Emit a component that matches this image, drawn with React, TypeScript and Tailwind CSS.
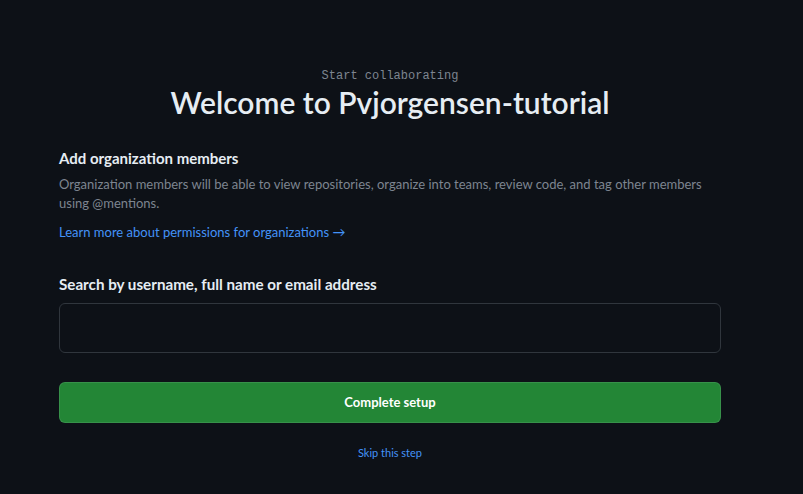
import React, { useState } from "react";

const App: React.FC = () => {
  const [query, setQuery] = useState("");

  return (
    <div className="min-h-[494px] w-full bg-[#0d1117] text-[#e6edf3] font-['Lato',sans-serif]">
      <div className="ml-[59px] w-[662px] pt-[68px]">
        <div className="text-center">
          <p className="font-['Liberation_Mono',monospace] text-[12px] leading-[16px] text-[#7d8590]">Start collaborating</p>
          <h1 className="text-[30px] leading-[36px] font-semibold text-[#e6edf3]">Welcome to Pvjorgensen-tutorial</h1>
        </div>

        <div className="mt-[27px]">
          <h2 className="text-[15px] leading-[22px] font-bold">Add organization members</h2>
          <p className="mt-[6px] text-[13px] leading-[19px] text-[#7d8590]">
            Organization members will be able to view repositories, organize into teams, review code, and tag other members using @mentions.
          </p>
          <a href="#" className="mt-[10px] block text-[13px] leading-[19px] text-[#4493f8]">
            Learn more about permissions for organizations →
          </a>
        </div>

        <form className="mt-[31px]" onSubmit={(e) => e.preventDefault()}>
          <label className="block text-[15.2px] leading-[22px] font-bold">Search by username, full name or email address</label>
          <input
            value={query}
            onChange={(e) => setQuery(e.target.value)}
            className="mt-[8px] block h-[50px] w-full rounded-md border border-[#30363d] bg-[#0d1117] px-3 text-[14px] outline-none"
          />
          <button
            type="submit"
            className="mt-[29px] h-[41px] w-full rounded-md border border-[rgba(240,246,252,0.1)] bg-[#238636] text-[13px] font-bold text-white"
          >
            Complete setup
          </button>
          <div className="mt-[16px] text-center">
            <a href="#" className="text-[11px] leading-[16px] text-[#4493f8]">Skip this step</a>
          </div>
        </form>
      </div>
    </div>
  );
};

export default App;
